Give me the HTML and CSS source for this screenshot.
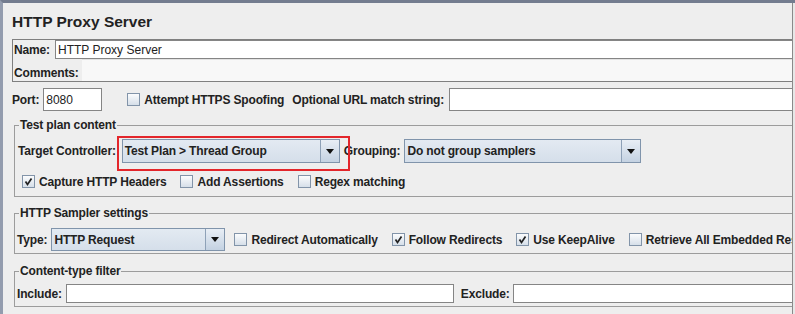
FILE: index.html
```html
<!DOCTYPE html>
<html lang="en">
<head>
    <meta charset="UTF-8">
    <title>HTTP Proxy Server</title>
    <link rel="stylesheet" href="styles.css">
</head>
<body>

    <div class="window">
        <div class="pane">
            <h1 class="title">HTTP Proxy Server</h1>

            <!-- Name / comments -->
            <div class="name-panel">
                <div class="name-row">
                    <label class="lbl name-lbl" for="name">Name:</label>
                    <input class="field name-field" id="name" type="text" value="HTTP Proxy Server">
                </div>
                <div class="comments-row">
                    <label class="lbl name-lbl">Comments:</label>
                    <div class="comments-field"></div>
                </div>
            </div>

            <!-- Port row -->
            <div class="port-row">
                <label class="lbl" for="port">Port:</label>
                <input class="field port-field" id="port" type="text" value="8080">
                <span class="check-item spoof">
                    <span class="box"></span>
                    <span class="lbl">Attempt HTTPS Spoofing</span>
                </span>
                <label class="lbl url-lbl" for="url">Optional URL match string:</label>
                <input class="field url-field" id="url" type="text" value="">
            </div>

            <!-- Test plan content -->
            <fieldset class="group plan-group">
                <legend class="lbl">Test plan content</legend>
                <div class="combo-row">
                    <span class="lbl">Target Controller:</span>
                    <div class="combo target-combo">
                        <span class="combo-text">Test Plan &gt; Thread Group</span>
                        <span class="combo-arrow"></span>
                        <span class="highlight"></span>
                    </div>
                    <span class="lbl grouping-lbl">Grouping:</span>
                    <div class="combo grouping-combo">
                        <span class="combo-text">Do not group samplers</span>
                        <span class="combo-arrow"></span>
                    </div>
                </div>
                <div class="check-row">
                    <span class="check-item">
                        <span class="box checked"><svg width="11" height="11" viewBox="0 0 11 11"><path d="M2.5 5.5 L4.5 8.5 L8.5 2.5" fill="none" stroke="#222" stroke-width="1.7"/></svg></span>
                        <span class="lbl">Capture HTTP Headers</span>
                    </span>
                    <span class="check-item">
                        <span class="box"></span>
                        <span class="lbl">Add Assertions</span>
                    </span>
                    <span class="check-item">
                        <span class="box"></span>
                        <span class="lbl">Regex matching</span>
                    </span>
                </div>
            </fieldset>

            <!-- HTTP Sampler settings -->
            <fieldset class="group sampler-group">
                <legend class="lbl">HTTP Sampler settings</legend>
                <div class="type-row">
                    <span class="lbl">Type:</span>
                    <div class="combo type-combo">
                        <span class="combo-text">HTTP Request</span>
                        <span class="combo-arrow"></span>
                    </div>
                    <span class="check-item first">
                        <span class="box"></span>
                        <span class="lbl">Redirect Automatically</span>
                    </span>
                    <span class="check-item">
                        <span class="box checked"><svg width="11" height="11" viewBox="0 0 11 11"><path d="M2.5 5.5 L4.5 8.5 L8.5 2.5" fill="none" stroke="#222" stroke-width="1.7"/></svg></span>
                        <span class="lbl">Follow Redirects</span>
                    </span>
                    <span class="check-item">
                        <span class="box checked"><svg width="11" height="11" viewBox="0 0 11 11"><path d="M2.5 5.5 L4.5 8.5 L8.5 2.5" fill="none" stroke="#222" stroke-width="1.7"/></svg></span>
                        <span class="lbl">Use KeepAlive</span>
                    </span>
                    <span class="check-item">
                        <span class="box"></span>
                        <span class="lbl">Retrieve All Embedded Resources from HTML Files</span>
                    </span>
                </div>
            </fieldset>

            <!-- Content-type filter -->
            <fieldset class="group filter-group">
                <legend class="lbl">Content-type filter</legend>
                <div class="filter-row">
                    <label class="lbl" for="include">Include:</label>
                    <input class="field include-field" id="include" type="text" value="">
                    <label class="lbl exclude-lbl" for="exclude">Exclude:</label>
                    <input class="field exclude-field" id="exclude" type="text" value="">
                </div>
            </fieldset>
        </div>
    </div>

</body>
</html>
```

FILE: styles.css
```css
/* General Styles */
* {
    margin: 0;
    padding: 0;
    box-sizing: border-box;
}

body {
    width: 795px;
    height: 314px;
    overflow: hidden;
    background: #e7e7e7;
    font-family: "Liberation Sans", Arial, sans-serif;
    font-size: 12px;
    color: #222;
}

.window {
    height: 314px;
    border-top: 3px solid #737c8f;
    border-left: 3px solid #939cae;
    display: flex;
}

.pane {
    width: 790px;
    height: 100%;
    overflow: hidden;
    background: #eeeeee;
    border-right: 1px solid #8a8a8a;
    padding: 9px 0 0 9px;
}

.title {
    font-size: 15.5px;
    font-weight: bold;
    line-height: 20px;
    color: #222;
}

/* Labels */
.lbl {
    font-weight: bold;
    letter-spacing: -0.15px;
    white-space: nowrap;
    color: #222;
}

/* Text fields */
.field {
    font-family: "Liberation Sans", Arial, sans-serif;
    font-size: 12px;
    color: #222;
    background: #fff;
    border: 1px solid #858585;
    padding: 0 2px;
    outline: none;
}

/* Name panel */
.name-panel {
    margin-top: 7px;
    width: 900px;
    border: 1px solid #7f7f7f;
}

.name-row {
    display: flex;
    height: 19px;
}

.name-lbl {
    width: 42px;
    padding-left: 1px;
    display: flex;
    align-items: center;
}

.name-field {
    flex: 1;
    height: 19px;
}

.comments-row {
    display: flex;
    height: 22px;
}

.comments-row .name-lbl {
    width: 69px;
    padding-top: 5px;
}

.comments-field {
    flex: 1;
    background: #f8f8f8;
    border-top: 1px solid #e2e2e2;
}

/* Port row */
.port-row {
    display: flex;
    align-items: center;
    margin-top: 6px;
    height: 23px;
    width: 900px;
}

.port-field {
    width: 59px;
    height: 23px;
    margin-left: 4px;
}

.port-row .spoof {
    margin-left: 25px;
    margin-right: 0;
}

.url-lbl {
    margin-left: 8px;
}

.url-field {
    width: 400px;
    height: 23px;
    margin-left: 5px;
}

/* Titled groups */
.group {
    margin: 7px 0 0 2px;
    width: 900px;
    border: 1px solid #9c9c9c;
    padding: 0;
}

.group legend {
    margin-left: 4px;
    padding: 0 1px;
    line-height: 14px;
}

.sampler-group {
    margin-top: 9px;
    padding-bottom: 2px;
}

.filter-group {
    margin-top: 10px;
    padding-bottom: 3px;
}

.plan-group {
    padding-bottom: 6px;
}

/* Combo boxes */
.combo-row {
    display: flex;
    align-items: center;
    margin-top: 7px;
    padding-left: 3px;
    height: 24px;
}

.combo {
    position: relative;
    display: flex;
    height: 24px;
    margin-left: 4px;
    border: 1px solid #8094ab;
    background: linear-gradient(to bottom, #e3eaf2, #d5dfea);
}

.combo-text {
    flex: 1;
    padding-left: 2px;
    font-weight: bold;
    letter-spacing: -0.15px;
    white-space: nowrap;
    display: flex;
    align-items: center;
}

.combo-arrow {
    width: 19px;
    border-left: 1px solid #8ea1b7;
    background: linear-gradient(to bottom, #e8eef5, #c4d2e2);
    display: flex;
    align-items: center;
    justify-content: center;
}

.combo-arrow::after {
    content: "";
    border-left: 4.5px solid transparent;
    border-right: 4.5px solid transparent;
    border-top: 5px solid #111;
}

.target-combo {
    width: 218px;
    margin-left: 6px;
}

.grouping-combo {
    width: 237px;
}

.grouping-lbl {
    margin-left: 4px;
}

/* Red annotation box */
.highlight {
    position: absolute;
    left: -6px;
    top: -4px;
    width: 233px;
    height: 35px;
    border: 2px solid #e3262b;
}

/* Check boxes */
.check-row {
    display: flex;
    align-items: center;
    margin-top: 10px;
    padding-left: 7px;
    height: 17px;
}

.check-item {
    display: flex;
    align-items: center;
    margin-right: 14px;
}

.box {
    width: 13px;
    height: 13px;
    margin-right: 4px;
    border: 1px solid #8294a9;
    background: linear-gradient(to bottom, #fbfcfd, #d6dfe9);
    display: flex;
    align-items: center;
    justify-content: center;
}

/* Sampler row */
.type-row {
    display: flex;
    align-items: center;
    margin-top: 8px;
    padding-left: 2px;
    height: 23px;
}

.type-combo {
    width: 174px;
    height: 23px;
}

.type-row .first {
    margin-left: 9px;
}

/* Filter row */
.filter-row {
    display: flex;
    align-items: center;
    margin-top: 6px;
    padding-left: 2px;
    height: 19px;
}

.include-field {
    width: 388px;
    height: 19px;
    margin-left: 4px;
}

.exclude-lbl {
    margin-left: 7px;
}

.exclude-field {
    width: 400px;
    height: 19px;
    margin-left: 3px;
}
```
